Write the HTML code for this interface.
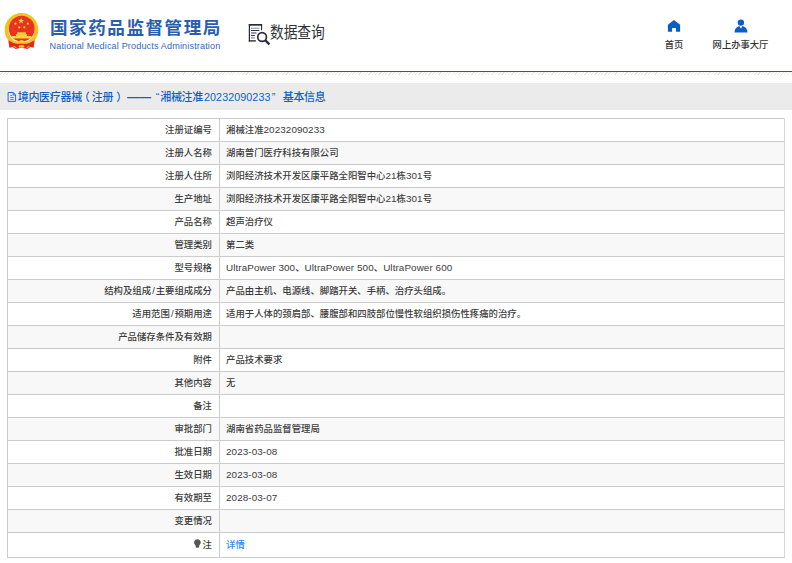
<!DOCTYPE html>
<html lang="zh-CN">
<head>
<meta charset="utf-8">
<title>数据查询</title>
<style>
*{box-sizing:border-box;margin:0;padding:0}
html,body{width:792px;height:563px;background:#fff;overflow:hidden}
body{position:relative;font-family:"Liberation Sans","Noto Sans CJK SC",sans-serif;color:#333;-webkit-text-size-adjust:none}
.abs{position:absolute;white-space:nowrap}
#emblem{left:4px;top:12px;width:36px;height:39px}
#title{left:50px;top:16px;font-size:17.6px;font-weight:bold;color:#2a5db0;letter-spacing:1.5px;line-height:24px}
#subtitle{left:49.5px;top:40px;font-size:9.1px;color:#3568bb;line-height:12px;letter-spacing:0.14px}
#qicon{left:248px;top:23px;width:23px;height:23px}
#qtext{left:270px;top:23px;font-size:13.8px;color:#333;line-height:20px;letter-spacing:-0.15px;transform:scaleY(1.13);transform-origin:0 50%}
.nav{font-size:9.3px;font-weight:500;color:#333;line-height:12px;text-align:center}
#hline{left:0;top:71px;width:792px;height:1px;background:#0c5fc3}
#hatch{left:0;top:72px;width:792px;height:3px;background:repeating-linear-gradient(135deg,#fff 0,#fff 1.45px,#e9e9e9 1.45px,#e9e9e9 2.35px)}
#bar{left:0;top:83px;width:792px;height:27px;background:#ebebeb}
#bartext{left:-0.3px;top:89px;width:400px;height:16px;font-size:11px;letter-spacing:-0.3px;font-weight:500;color:#0f5fc8;line-height:16px}
#bartext span{position:absolute;top:0;white-space:nowrap}
table{position:absolute;left:7px;top:118px;width:778px;border-collapse:collapse;table-layout:fixed;font-size:9.4px;font-weight:500;color:#3c3c3c}
td{border:1px solid #ccc;height:23px;line-height:12px;padding:0 7px 0 6px;vertical-align:middle;white-space:nowrap;overflow:hidden}
td.l{width:212px;text-align:right}
tr:nth-child(even) td{background:#f8f8f8}
tr:last-child td{height:25px}
td:last-child{border-right-color:#d6d6de}
.n{font-size:9.9px;letter-spacing:0.08px}
.s{margin:0 1px}
a{color:#2f8af0;text-decoration:none}
</style>
</head>
<body>
<svg id="emblem" class="abs" style="left:0;top:0;width:44px;height:58px" viewBox="0 0 44 58">
<circle cx="21.5" cy="29.9" r="14.9" fill="none" stroke="#f4c220" stroke-width="3.9"/>
<path d="M8.3 40.2 L9.4 47.8 L12.6 47 L15.6 49.1 L21.5 47.7 L27.4 49.1 L30.4 47 L33.6 47.8 L34.7 40.2 Q28 44.6 21.5 43.6 Q15 44.6 8.3 40.2 Z" fill="#df2a1c"/>
<circle cx="21.7" cy="28.7" r="12.9" fill="#e9321f"/>
<path d="M12.4 40.4 Q17 43 21.5 40.6 Q26 43 30.6 40.4 L31.2 42 Q26 45 21.5 42.6 Q17 45 11.8 42 Z" fill="#f4c220"/>
<ellipse cx="21.5" cy="41.6" rx="2.5" ry="1.7" fill="#f6cf3a"/>
<ellipse cx="21.5" cy="46.4" rx="3" ry="1.3" fill="#f4c830"/>
<path d="M13.6 46.6 L16.4 47.4 M29.4 46.6 L26.6 47.4" stroke="#f4c830" stroke-width="1" fill="none"/>
<g fill="#f8d23a">
<polygon points="21.1,17.7 21.9,19.9 24.2,19.9 22.4,21.3 23.1,23.6 21.1,22.2 19.1,23.6 19.8,21.3 18,19.9 20.3,19.9"/>
<circle cx="15.4" cy="23.7" r="1.15"/><circle cx="27.8" cy="23.7" r="1.15"/>
<circle cx="19.2" cy="27.3" r="1.15"/><circle cx="24.3" cy="27.3" r="1.15"/>
<rect x="17.2" y="32.3" width="8.6" height="2"/>
<rect x="16" y="34.1" width="11" height="2"/>
<rect x="11.8" y="36.1" width="19.5" height="2.4" rx="0.5"/>
</g>
</svg>
<div id="title" class="abs">国家药品监督管理局</div>
<div id="subtitle" class="abs">National Medical Products Administration</div>
<svg id="qicon" class="abs" style="left:244px;top:18px;width:32px;height:32px" viewBox="244 18 32 32">
<g fill="none" stroke="#2a2a3e">
<path d="M248.8 24.85 H262.1" stroke-width="1.7"/>
<path d="M249.4 24 V41.6" stroke-width="1.2"/>
<path d="M248.8 40.9 H255.9" stroke-width="1.4"/>
<path d="M261.55 24 V30.2" stroke-width="1.1"/>
<path d="M251 28.2 H259.3 M251 37.9 H254.8" stroke-width="1.1" stroke="#8a8a96"/>
<path d="M251 30.5 H259.3 M251 35.5 H254.8" stroke-width="1" stroke="#34344a"/>
<path d="M251 33 H256.5" stroke-width="1.2" stroke="#55556a"/>
<circle cx="262.1" cy="37" r="4.35" stroke-width="1.65" fill="#fff"/>
<path d="M265.4 40.4 L269.4 44.4" stroke-width="2.3"/>
</g></svg>
<div id="qtext" class="abs">数据查询</div>
<svg class="abs" id="home" style="left:664px;top:17px;width:20px;height:18px" viewBox="664 17 20 18">
<path d="M673.95 19.9 L680.1 24.7 V31.8 H676 V27.9 H672.1 V31.8 H667.9 V24.7 Z" fill="#0860c6"/>
</svg>
<div class="abs nav" style="left:654px;top:38.7px;width:40px">首页</div>
<svg class="abs" id="person" style="left:730px;top:16px;width:22px;height:20px" viewBox="730 16 22 20">
<circle cx="740.9" cy="22.6" r="3.2" fill="#0860c6"/>
<path d="M734.5 32.6 Q734.7 27.6 738.6 26.2 H739.6 L740.95 28.7 L742.3 26.2 H743.3 Q747.3 27.6 747.5 32.6 Z" fill="#0860c6"/>
</svg>
<div class="abs nav" style="left:700px;top:38.7px;width:81px">网上办事大厅</div>
<div id="hline" class="abs"></div>
<div id="hatch" class="abs"></div>
<div id="bar" class="abs"></div>
<svg class="abs" id="docicon" style="left:5px;top:88px;width:14px;height:17px" viewBox="5 88 14 17">
<path d="M8.1 92.5 H13.3 L15.6 94.8 V101.4 H8.1 Z M13.1 92.6 V95 H15.5" fill="none" stroke="#1a62c8" stroke-width="0.95"/>
<path d="M10.2 95.6 H12.4 M10.2 97.5 H13.8 M10.2 99.4 H13.8" stroke="#2a6ccc" stroke-width="0.8"/>
</svg>
<div id="bartext" class="abs"><span id="b1" style="left:18px">境内医疗器械</span><span id="b2a" style="left:79px">（</span><span id="b2" style="left:92px">注册</span><span id="b2b" style="left:116.5px">）</span><span id="b3" style="left:127px;top:-0.8px;transform:scale(1.10,1.5);transform-origin:0 55%;letter-spacing:0">——</span><span id="b4" style="left:156px">“</span><span id="b5" style="left:160.5px">湘械注准</span><span id="b6" style="left:204.3px;letter-spacing:0.1px;font-size:10.7px">20232090233</span><span id="b7" style="left:272px">”</span><span id="b8" style="left:283px">基本信息</span></div>
<table>
<tr><td class="l">注册证编号</td><td>湘械注准<span class="n">20232090233</span></td></tr>
<tr><td class="l">注册人名称</td><td>湖南普门医疗科技有限公司</td></tr>
<tr><td class="l">注册人住所</td><td>浏阳经济技术开发区康平路全阳智中心<span class="n">21</span>栋<span class="n">301</span>号</td></tr>
<tr><td class="l">生产地址</td><td>浏阳经济技术开发区康平路全阳智中心<span class="n">21</span>栋<span class="n">301</span>号</td></tr>
<tr><td class="l">产品名称</td><td>超声治疗仪</td></tr>
<tr><td class="l">管理类别</td><td>第二类</td></tr>
<tr><td class="l">型号规格</td><td><span class="n">UltraPower 300</span>、<span class="n">UltraPower 500</span>、<span class="n">UltraPower 600</span></td></tr>
<tr><td class="l">结构及组成<span class="s">/</span>主要组成成分</td><td>产品由主机、电源线、脚踏开关、手柄、治疗头组成。</td></tr>
<tr><td class="l">适用范围<span class="s">/</span>预期用途</td><td>适用于人体的颈肩部、腰腹部和四肢部位慢性软组织损伤性疼痛的治疗。</td></tr>
<tr><td class="l">产品储存条件及有效期</td><td></td></tr>
<tr><td class="l">附件</td><td>产品技术要求</td></tr>
<tr><td class="l">其他内容</td><td>无</td></tr>
<tr><td class="l">备注</td><td></td></tr>
<tr><td class="l">审批部门</td><td>湖南省药品监督管理局</td></tr>
<tr><td class="l">批准日期</td><td><span class="n">2023-03-08</span></td></tr>
<tr><td class="l">生效日期</td><td><span class="n">2023-03-08</span></td></tr>
<tr><td class="l">有效期至</td><td><span class="n">2028-03-07</span></td></tr>
<tr><td class="l">变更情况</td><td></td></tr>
<tr><td class="l">注</td><td><a>详情</a></td></tr>
</table>
<svg class="abs" id="bulb" style="left:192px;top:537px;width:12px;height:13px" viewBox="192 537 12 13">
<path d="M197.4 539.2 A3.3 3.3 0 0 1 199.6 545 L199.1 546 V547 L198.4 547.8 H196.4 L195.7 547 V546 L195.2 545 A3.3 3.3 0 0 1 197.4 539.2 Z" fill="#555"/>
</svg>
</body>
</html>
